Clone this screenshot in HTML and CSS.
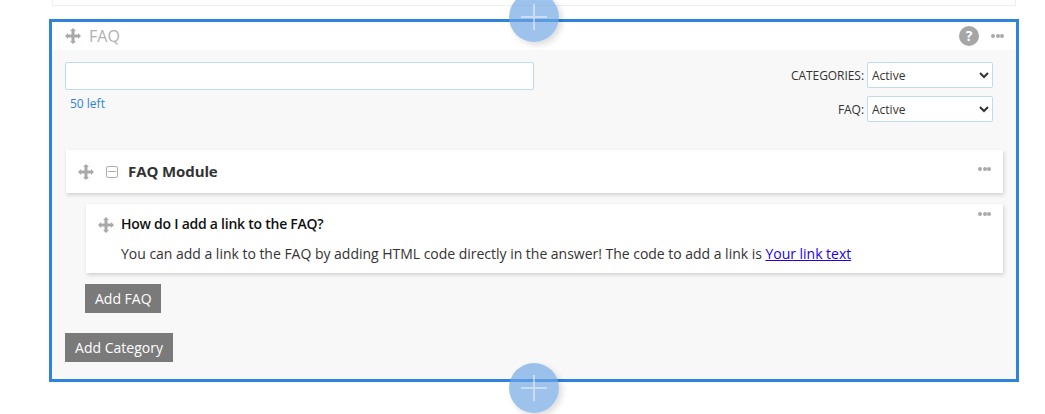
FILE: index.html
```html
<!DOCTYPE html>
<html lang="en">
<head>
    <meta charset="UTF-8">
    <title>FAQ</title>
    <link rel="stylesheet" href="styles.css">
</head>
<body>
<div class="page">
    <div class="prev-card"></div>

    <div class="block">
        <div class="add-btn add-top"><svg width="26" height="26" viewBox="0 0 26 26"><path d="M13 0V26M0 13H26"/></svg></div>

        <div class="block-head">
            <svg class="move" width="16" height="16" viewBox="0 0 16 16"><use href="#move"/></svg>
            <span class="block-title">FAQ</span>
            <span class="help">?</span>
            <span class="dots"><i></i><i></i><i></i></span>
        </div>

        <div class="block-body">
            <div class="settings">
                <div class="title-field">
                    <input class="title-input" type="text">
                    <div class="counter">50 left</div>
                </div>
                <div class="filters">
                    <label class="filter">CATEGORIES:
                        <select><option>Active</option></select>
                    </label>
                    <label class="filter">FAQ:
                        <select><option>Active</option></select>
                    </label>
                </div>
            </div>

            <div class="card module">
                <svg class="move" width="16" height="16" viewBox="0 0 16 16"><use href="#move"/></svg>
                <span class="collapse"></span>
                <span class="module-name">FAQ Module</span>
                <span class="dots"><i></i><i></i><i></i></span>
            </div>

            <div class="card item">
                <div class="item-main">
                    <svg class="move" width="16" height="16" viewBox="0 0 16 16"><use href="#move"/></svg>
                    <div>
                        <div class="question">How do I add a link to the FAQ?</div>
                        <div class="answer">You can add a link to the FAQ by adding HTML code directly in the answer! The code to add a link is <a href="#">Your link text</a></div>
                    </div>
                </div>
                <span class="dots"><i></i><i></i><i></i></span>
            </div>

            <button class="btn add-faq">Add FAQ</button>
            <button class="btn add-cat">Add Category</button>
        </div>

        <div class="add-btn add-bottom"><svg width="26" height="26" viewBox="0 0 26 26"><path d="M13 0V26M0 13H26"/></svg></div>
    </div>
</div>

<svg class="defs" width="0" height="0">
    <symbol id="move" viewBox="0 0 16 16">
        <path d="M8 0L11 3H9.5V6.5H13V5L16 8L13 11V9.5H9.5V13H11L8 16L5 13H6.5V9.5H3V11L0 8L3 5V6.5H6.5V3H5Z"/>
    </symbol>
</svg>
</body>
</html>
```

FILE: styles.css
```css
html, body {
    height: 414px;
    overflow: hidden;
}

body {
    margin: 0;
    background-color: white;
    color: #333;
    font-family: "Open Sans", sans-serif;
    font-size: 14px;
}

.defs {
    position: absolute;
}

.page {
    width: 970px;
    margin-left: 49px;
}

.prev-card {
    height: 5px;
    margin: 0 3px 13px;
    border: 1px solid #eee;
    border-top: none;
}

.block {
    position: relative;
    height: 357px;
    border: 3px solid #2e84dc;
}

.block-head {
    display: flex;
    align-items: center;
    height: 28px;
    padding: 0 12px 0 13px;
    background-color: white;
}

.move {
    flex: none;
    fill: #a9a9a9;
}

.block-title {
    margin-left: 8px;
    color: #b0b0b0;
    font-size: 16px;
}

.help {
    width: 20px;
    height: 20px;
    margin-left: auto;
    border-radius: 50%;
    background-color: #a6a6a6;
    color: white;
    font-size: 14px;
    font-weight: 700;
    line-height: 20px;
    text-align: center;
}

.dots {
    display: flex;
    flex: none;
    gap: 0.5px;
}

.dots i {
    width: 4px;
    height: 4px;
    border-radius: 50%;
    background-color: #a9a9a9;
}

.block-head .dots {
    margin-left: 12px;
}

.block-body {
    height: 329px;
    padding: 12px 13px 0 13px;
    box-sizing: border-box;
    background-color: #f8f8f8;
}

.settings {
    display: flex;
    justify-content: space-between;
    height: 88px;
    padding-right: 10px;
}

.title-input {
    display: block;
    box-sizing: border-box;
    width: 469px;
    height: 28px;
    border: 1px solid #bfdcec;
    border-radius: 2px;
    background-color: white;
}

.counter {
    margin: 5px 0 0 5px;
    color: #2e84dc;
    font-size: 12px;
}

.filters {
    display: flex;
    flex-direction: column;
    gap: 8px;
    align-items: flex-end;
}

.filter {
    display: flex;
    align-items: center;
    gap: 3px;
    font-size: 12px;
    letter-spacing: -0.05px;
}

.filter select {
    box-sizing: border-box;
    width: 126px;
    height: 26px;
    padding-left: 0;
    border: 1px solid #bfdcec;
    border-radius: 2px;
    background-color: white;
    color: #333;
    font-family: "Open Sans", sans-serif;
    font-size: 12px;
}

.card {
    background-color: white;
    box-shadow: 1px 2px 4px rgba(0, 0, 0, 0.16);
}

.module {
    display: flex;
    align-items: center;
    height: 43px;
    margin-left: 1px;
    padding: 0 12px;
}

.collapse {
    position: relative;
    box-sizing: border-box;
    width: 12px;
    height: 12px;
    margin-left: 12px;
    border: 1px solid #b5aaa5;
    border-radius: 2px;
}

.collapse::after {
    content: "";
    position: absolute;
    left: 1px;
    right: 1px;
    top: 4px;
    height: 1px;
    background-color: #b5aaa5;
}

.module-name {
    margin: 0 0 2px 10px;
    font-size: 15px;
    font-weight: 700;
    letter-spacing: -0.1px;
}

.module .dots {
    margin-left: auto;
    margin-bottom: 5px;
}

.item {
    display: flex;
    justify-content: space-between;
    height: 69px;
    margin: 11px 0 0 21px;
    padding: 0 12px;
    box-sizing: border-box;
}

.item .dots {
    margin-top: 8px;
}

.item-main {
    display: flex;
    gap: 7px;
    padding-top: 10px;
}

.item-main .move {
    margin-top: 3px;
}

.question {
    color: #111;
    font-size: 14px;
    font-weight: 600;
    letter-spacing: -0.25px;
    line-height: 20px;
}

.answer {
    margin-top: 10px;
    font-size: 14px;
    letter-spacing: -0.02px;
    line-height: 20px;
}

.answer a {
    color: #2200ee;
}

.btn {
    display: block;
    height: 29px;
    padding: 0 10px;
    border: none;
    background-color: #7a7a7a;
    color: white;
    font-family: "Open Sans", sans-serif;
    font-size: 14px;
}

.add-faq {
    margin: 11px 0 0 20px;
    padding-right: 9px;
}

.add-cat {
    margin-top: 20px;
    width: 108px;
}

.add-btn {
    position: absolute;
    left: 457px;
    display: flex;
    align-items: center;
    justify-content: center;
    width: 50px;
    height: 50px;
    border-radius: 50%;
    background-color: rgba(110, 165, 225, 0.68);
    box-shadow: 3px 3px 6px rgba(0, 0, 0, 0.14);
}

.add-btn path {
    stroke: rgba(255, 255, 255, 0.45);
    stroke-width: 2;
}

.add-top {
    top: -30px;
}

.add-bottom {
    top: 341px;
}
```
